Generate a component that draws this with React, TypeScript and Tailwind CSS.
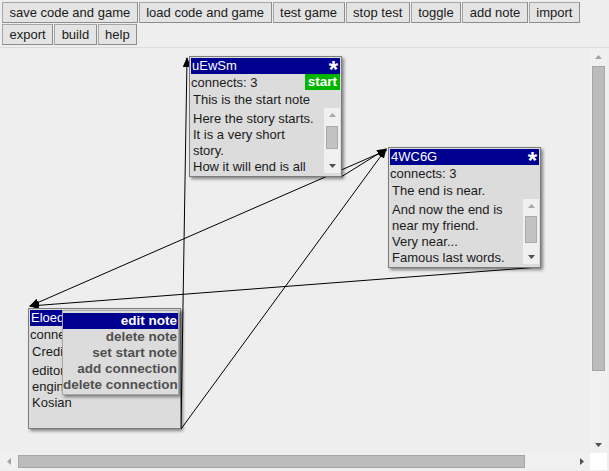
import React from 'react';

interface NoteProps {
  id: string;
  left: number;
  top: number;
  desc: string;
  lines: string[];
  start?: boolean;
  thumb?: { top: number; height: number } | null;
}

const buttons = [
  'save code and game',
  'load code and game',
  'test game',
  'stop test',
  'toggle',
  'add note',
  'import',
  'export',
  'build',
  'help',
];

// connections between notes, canvas coordinates
const links = [
  { x1: 181, y1: 381, x2: 187, y2: 10 },
  { x1: 181, y1: 381, x2: 386, y2: 101 },
  { x1: 341, y1: 129, x2: 386, y2: 101 },
  { x1: 387, y1: 102, x2: 30, y2: 258 },
  { x1: 540, y1: 219, x2: 30, y2: 258 },
];

const menuItems = ['edit note', 'delete note', 'set start note', 'add connection', 'delete connection'];

const Arrow: React.FC<{ dir: 'up' | 'down' | 'left' | 'right'; color: string }> = ({ dir, color }) => {
  const pts = {
    up: '0,4 3.5,0 7,4',
    down: '0,0 7,0 3.5,4',
    left: '4,0 4,7 0,3.5',
    right: '0,0 4,3.5 0,7',
  }[dir];
  const vertical = dir === 'up' || dir === 'down';
  return (
    <svg width={vertical ? 7 : 4} height={vertical ? 4 : 7}>
      <polygon points={pts} fill={color} />
    </svg>
  );
};

const Note: React.FC<NoteProps> = ({ id, left, top, desc, lines, start, thumb }) => (
  <div
    className="absolute w-[153px] h-[121px] border border-[#7c7c7c] bg-[#dcdcdc] p-px shadow-[2px_2px_3px_rgba(0,0,0,0.45)] text-[13px] text-[#1a1a1a]"
    style={{ left, top }}
  >
    <div className="h-[16px] bg-[#000090] text-white flex justify-between items-start leading-[16px] pl-[1px] pr-[2px]">
      <span>{id}</span>
      <span className="font-bold text-[24px] leading-[24px] h-[16px]">*</span>
    </div>
    <div className="h-[17px] flex justify-between items-start">
      <span className="leading-[17px]">connects: 3</span>
      {start && (
        <span className="h-[16px] bg-[#00b400] text-white font-bold text-[13.5px] leading-[16px] px-[3px]">start</span>
      )}
    </div>
    <div className="h-[17px] leading-[17px] pl-[2px]">{desc}</div>
    <div className="h-[65px] flex">
      <div className="flex-1 pl-[2px] pt-[3px] leading-[16px] overflow-hidden">
        {lines.map((l, i) => (
          <div key={i} className="whitespace-nowrap">{l}</div>
        ))}
      </div>
      {thumb && (
        <div className="w-[16px] bg-[#f0f0f0] flex flex-col relative">
          <div className="h-[14px] flex items-center justify-center">
            <Arrow dir="up" color="#a8a8a8" />
          </div>
          <div
            className="absolute left-[2px] w-[12px] bg-[#c2c2c2] border border-[#ababab]"
            style={{ top: thumb.top, height: thumb.height }}
          />
          <div className="flex-1" />
          <div className="h-[14px] flex items-center justify-center">
            <Arrow dir="down" color="#505050" />
          </div>
        </div>
      )}
    </div>
  </div>
);

export default function App() {
  return (
    <div className="w-[609px] h-[471px] bg-[#eeeeee] font-[family-name:'Liberation_Sans',Arial,sans-serif] overflow-hidden">
      {/* toolbar */}
      <div className="h-[48px] border-b border-[#dcdcdc] px-[2px] pt-[2px] flex flex-wrap content-start gap-[1px]">
        {buttons.map((b) => (
          <button
            key={b}
            className="h-[21px] px-[6.5px] border border-[#a6a6a6] border-b-[#8c8c8c] border-r-[#8c8c8c] bg-[#e4e4e4] text-[13px] leading-[15px] text-[#1a1a1a]"
          >
            {b}
          </button>
        ))}
      </div>

      {/* canvas + scrollbars */}
      <div className="pr-[2px]">
        <div className="flex h-[405px]">
          <div className="relative flex-1 overflow-hidden bg-[#eeeeee]">
            <svg className="absolute left-0 top-0" width="590" height="405">
              <defs>
                <marker
                  id="ah"
                  markerWidth="10"
                  markerHeight="8"
                  refX="9"
                  refY="4"
                  orient="auto"
                  markerUnits="userSpaceOnUse"
                >
                  <path d="M0,0 L10,4 L0,8 z" fill="#000" />
                </marker>
              </defs>
              {links.map((l, i) => (
                <line
                  key={i}
                  x1={l.x1}
                  y1={l.y1}
                  x2={l.x2}
                  y2={l.y2}
                  stroke="#000"
                  strokeWidth="1"
                  markerEnd="url(#ah)"
                />
              ))}
            </svg>

            <Note
              id="uEwSm"
              left={189}
              top={8}
              start
              desc="This is the start note"
              lines={['Here the story starts.', 'It is a very short', 'story.', 'How it will end is all']}
              thumb={{ top: 18, height: 23 }}
            />
            <Note
              id="4WC6G"
              left={388}
              top={99}
              desc="The end is near."
              lines={['And now the end is', 'near my friend.', 'Very near...', 'Famous last words.']}
              thumb={{ top: 17, height: 27 }}
            />
            <Note
              id="Eloedit"
              left={28}
              top={260}
              desc="Credits"
              lines={['editor made by', 'engine made by', 'Kosian']}
              thumb={null}
            />

            {/* context menu */}
            <div className="absolute left-[62px] top-[262px] w-[117px] border border-[#a8a8a8] bg-[#dcdcdc] pt-[2px] pb-px shadow-[2px_2px_3px_rgba(0,0,0,0.45)]">
              {menuItems.map((m, i) => (
                <div
                  key={m}
                  className={
                    i === 0
                      ? 'h-[16px] leading-[16px] text-right pr-[1px] font-bold text-[13.5px] bg-[#000090] text-white whitespace-nowrap'
                      : 'h-[16px] leading-[16px] text-right pr-[1px] font-bold text-[13.5px] text-[#505050] whitespace-nowrap'
                  }
                >
                  {m}
                </div>
              ))}
            </div>
          </div>

          {/* vertical scrollbar */}
          <div className="w-[17px] bg-[#f0f0f0] flex flex-col">
            <div className="h-[17px] flex items-center justify-center">
              <Arrow dir="up" color="#a3a3a3" />
            </div>
            <div className="mt-px mx-[2px] h-[305px] bg-[#bcbcbc] border border-[#a6a6a6]" />
            <div className="flex-1" />
            <div className="h-[17px] flex items-center justify-center">
              <Arrow dir="down" color="#505050" />
            </div>
          </div>
        </div>

        {/* horizontal scrollbar */}
        <div className="flex h-[17px]">
          <div className="flex-1 bg-[#f0f0f0] flex items-center">
            <div className="w-[17px] flex items-center justify-center">
              <Arrow dir="left" color="#a3a3a3" />
            </div>
            <div className="ml-px w-[507px] h-[13px] bg-[#bcbcbc] border border-[#a6a6a6]" />
            <div className="flex-1" />
            <div className="w-[17px] flex items-center justify-center">
              <Arrow dir="right" color="#505050" />
            </div>
          </div>
          <div className="w-[17px] bg-white" />
        </div>
      </div>
    </div>
  );
}
